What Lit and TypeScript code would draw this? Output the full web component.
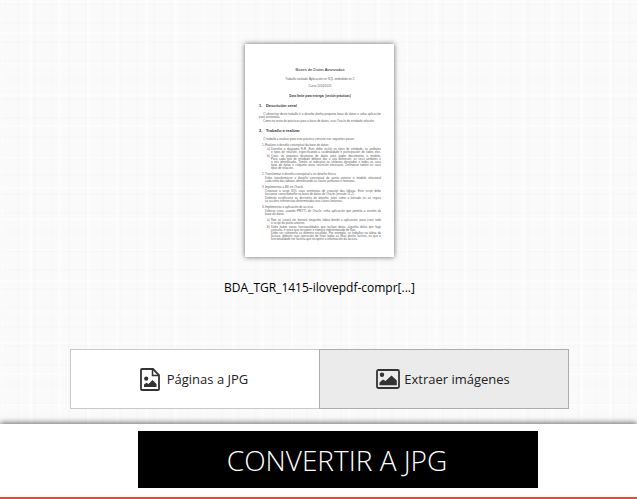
import { LitElement, html, css } from "lit";
import { customElement, state } from "lit/decorators.js";

interface Line {
  text: string;
  full?: boolean;
  mark?: string;
}
interface Block {
  kind: string;
  lines: Line[];
}

const full = (text: string, mark?: string): Line => ({ text, full: true, mark });
const end = (text: string, mark?: string): Line => ({ text, mark });

const BLOCKS: Block[] = [
  {
    kind: "intro",
    lines: [
      full("O obxectivo deste traballo é o deseño dunha pequena base de datos e unha aplicación"),
      end("para xestionala."),
    ],
  },
  { kind: "intro", lines: [end("Como no resto de prácticas para a base de datos, usar Oracle de entidade-relación.")] },
  { kind: "heading", lines: [end("Traballo a realizar", "2.")] },
  { kind: "intro", lines: [end("O traballo a realizar para esta práctica consiste nos seguintes pasos:")] },
  { kind: "item", lines: [end("Realizar o deseño conceptual da base de datos:", "1.")] },
  {
    kind: "sub",
    lines: [
      full("Deseñar o diagrama E-R. Este debe incluír os tipos de entidade, os atributos", "a)"),
      full("e tipos de relación, especificando a cardinalidade e participación de todos eles."),
    ],
  },
  {
    kind: "sub",
    lines: [
      full("Crear un pequeno dicionario de datos para poder documentar o modelo.", "b)"),
      full("Para cada tipo de entidade débese dar a súa definición, os seus atributos e"),
      full("o seu identificador. Tamén se indicarán os atributos derivados e todos os seus"),
      full("tipos de datos e calquera outra restrición necesaria. Defínense tamén os seus"),
      end("tipos de relación."),
    ],
  },
  { kind: "item", lines: [end("Transformar o deseño conceptual a un deseño lóxico.", "2.")] },
  {
    kind: "body",
    lines: [
      full("Debe transformarse o deseño conceptual do punto anterior ó modelo relacional"),
      end("cada unha das táboas, identificando as claves primarias e foráneas."),
    ],
  },
  { kind: "item", lines: [end("Implementar a BD en Oracle.", "3.")] },
  {
    kind: "body",
    lines: [
      full("Crearase o script SQL coas sentenzas de creación das táboas. Este script debe"),
      end("funcionar correctamente na base de datos de Oracle (versión 11.2)."),
    ],
  },
  {
    kind: "body",
    lines: [
      full("Deberán xustificarse as decisións de deseño, tales como o borrado ou as regras"),
      end("as accións referenciais determinadas nas claves foráneas."),
    ],
  },
  { kind: "item", lines: [end("Implementar a aplicación de acceso.", "4.")] },
  {
    kind: "body",
    lines: [
      full("Débese crear, usando PRO*C de Oracle, unha aplicación que permita a xestión da"),
      end("base de datos."),
    ],
  },
  {
    kind: "sub gap",
    lines: [
      full("Non se creará nin borrará ningunha táboa dende a aplicación, para crear todo", "a)"),
      end("o script do punto anterior."),
    ],
  },
  {
    kind: "sub",
    lines: [
      full("Debe haber varias funcionalidades que inclúan datos, algunha delas que faga", "b)"),
      end("consulta, e outra que recupere o número indeterminado de filas."),
      full("Debe ser coherente co dominio escollido. Por exemplo, se traballas na táboa da"),
      full("factura, debería usar operación de listar todas as liñas dunha factura, ou que a"),
      end("funcionalidade ver factura que recupere a información da factura."),
    ],
  },
];

@customElement("pdf-preview")
export class PdfPreview extends LitElement {
  static styles = css`
    :host {
      display: block;
      box-sizing: border-box;
      width: 149px;
      padding: 23px 13px 16px 14px;
      background: #fff;
      box-shadow: 0 0 5px rgba(0, 0, 0, 0.6);
      font-family: "Liberation Sans", Arial, sans-serif;
      font-size: 3px;
      line-height: 3px;
      color: #606060;
      overflow: hidden;
    }
    .title {
      margin: 0;
      font-size: 4px;
      line-height: 5px;
      font-weight: 400;
      text-align: center;
      color: #222;
    }
    .center {
      margin: 6px 0 0;
      text-align: center;
    }
    .center.near {
      margin-top: 4px;
    }
    .center.strong {
      margin-top: 7px;
      font-weight: 700;
      color: #333;
    }
    .line {
      display: flex;
      white-space: nowrap;
    }
    .text {
      flex: 1;
    }
    .full .text {
      text-align: justify;
      text-align-last: justify;
    }
    .intro {
      margin-top: 1px;
    }
    .intro .line:first-child {
      padding-left: 4px;
    }
    .heading {
      margin: 6px 0 5px;
      font-size: 4px;
      line-height: 4px;
      font-weight: 700;
      color: #333;
    }
    .heading .mark {
      width: 7px;
    }
    .item {
      margin-top: 3px;
      padding-left: 3px;
    }
    .item .mark {
      width: 3px;
    }
    .body {
      margin-top: 1px;
      padding-left: 6px;
    }
    .sub {
      margin-top: 1px;
      padding-left: 8px;
    }
    .sub .mark {
      width: 4px;
    }
    .sub .line:not(.marked) {
      padding-left: 4px;
    }
    .sub.gap {
      margin-top: 3px;
    }
  `;

  private block(b: Block) {
    return html`<div class=${b.kind}>
      ${b.lines.map(
        (l) => html`<div class="line ${l.full ? "full" : ""} ${l.mark ? "marked" : ""}">
          ${l.mark ? html`<span class="mark">${l.mark}</span>` : ""}<span class="text">${l.text}</span>
        </div>`
      )}
    </div>`;
  }

  render() {
    return html`
      <h2 class="title">Bases de Datos Avanzadas</h2>
      <p class="center">Traballo tutelado: Aplicación en SQL embebido en C</p>
      <p class="center near">Curso 2014/2015</p>
      <p class="center strong">Data límite para entrega: (sesión prácticas)</p>
      ${this.block({ kind: "heading", lines: [end("Descrición xeral", "1.")] })}
      ${BLOCKS.map((b) => this.block(b))}
    `;
  }
}

@customElement("app-root")
export class AppRoot extends LitElement {
  static styles = css`
    :host {
      display: flex;
      flex-direction: column;
      box-sizing: border-box;
      min-height: 100vh;
      font-family: "Open Sans", "Noto Sans", sans-serif;
      color: #000;
      background-color: #fafafa;
      background-image:
        repeating-linear-gradient(90deg, rgba(0, 0, 0, 0.008) 0 2px, transparent 2px 17px),
        repeating-linear-gradient(90deg, rgba(255, 255, 255, 0.4) 0 3px, transparent 3px 29px),
        repeating-linear-gradient(0deg, rgba(0, 0, 0, 0.008) 0 2px, transparent 2px 19px),
        repeating-linear-gradient(0deg, rgba(255, 255, 255, 0.4) 0 2px, transparent 2px 31px);
    }
    .workspace {
      flex: 1;
      display: flex;
      flex-direction: column;
      align-items: center;
      padding: 44px 16px 15px 18px;
    }
    .file {
      margin: 0;
      display: flex;
      flex-direction: column;
      align-items: center;
    }
    .name {
      margin-top: 22px;
      font-size: 12px;
      line-height: 18px;
    }
    .options {
      display: flex;
      width: 100%;
      max-width: 499px;
      margin-top: auto;
    }
    .option {
      flex: 1 1 0;
      display: flex;
      align-items: center;
      justify-content: center;
      gap: 7px;
      height: 60px;
      padding: 0 2px 0 0;
      border: 1px solid #c8c8c8;
      background: #fff;
      color: #222;
      font: 13px/18px "Open Sans", "Noto Sans", sans-serif;
      cursor: pointer;
    }
    .option + .option {
      gap: 4px;
      margin-left: -1px;
    }
    .option.off {
      background: #ebebeb;
      border-color: #acacac;
    }
    .bar {
      display: flex;
      justify-content: center;
      padding: 7px 0 9px 39px;
      background: #fff;
      border-bottom: 2px solid #e8483a;
      box-shadow: 0 -1px 6px rgba(0, 0, 0, 0.6);
    }
    .convert {
      width: 100%;
      max-width: 400px;
      height: 57px;
      padding: 0 2px 0 0;
      border: 0;
      background: #000;
      color: #fff;
      font: 300 28px/40px "Open Sans", "Noto Sans", sans-serif;
      text-transform: uppercase;
      cursor: pointer;
    }
  `;

  @state() private mode = "pages";

  private option(id: string, label: string, icon: unknown) {
    const on = this.mode === id;
    return html`<button
      type="button"
      class="option ${on ? "" : "off"}"
      aria-pressed=${on ? "true" : "false"}
      @click=${() => (this.mode = id)}
    >
      ${icon}<span>${label}</span>
    </button>`;
  }

  render() {
    const page = html`<svg width="20" height="23" viewBox="0 0 20 23" aria-hidden="true">
      <path d="M2 1H13L19 7V21Q19 22 18 22H2Q1 22 1 21V2Q1 1 2 1Z" fill="none" stroke="#333" stroke-width="1.8" />
      <path d="M12.5 1.5V7.5H18.5" fill="none" stroke="#333" stroke-width="1.5" />
      <circle cx="6.2" cy="10.7" r="2.1" fill="#333" />
      <path d="M4 19V16.5L6.5 14.8L8.5 16L12.5 12L16.5 16V19Z" fill="#333" />
    </svg>`;
    const picture = html`<svg width="24" height="20" viewBox="0 0 24 20" aria-hidden="true">
      <rect x="1" y="1" width="22" height="18" rx="1.5" fill="none" stroke="#333" stroke-width="1.8" />
      <circle cx="6" cy="5.8" r="2.2" fill="#333" />
      <path d="M3.5 16.3V13.5L7 10.5L9.5 12L15.5 6.5L20.8 11.5V16.3Z" fill="#333" />
    </svg>`;
    return html`
      <main class="workspace">
        <figure class="file">
          <pdf-preview></pdf-preview>
          <figcaption class="name">BDA_TGR_1415-ilovepdf-compr[...]</figcaption>
        </figure>
        <div class="options">
          ${this.option("pages", "Páginas a JPG", page)} ${this.option("images", "Extraer imágenes", picture)}
        </div>
      </main>
      <footer class="bar">
        <button type="button" class="convert">Convertir a JPG</button>
      </footer>
    `;
  }
}
